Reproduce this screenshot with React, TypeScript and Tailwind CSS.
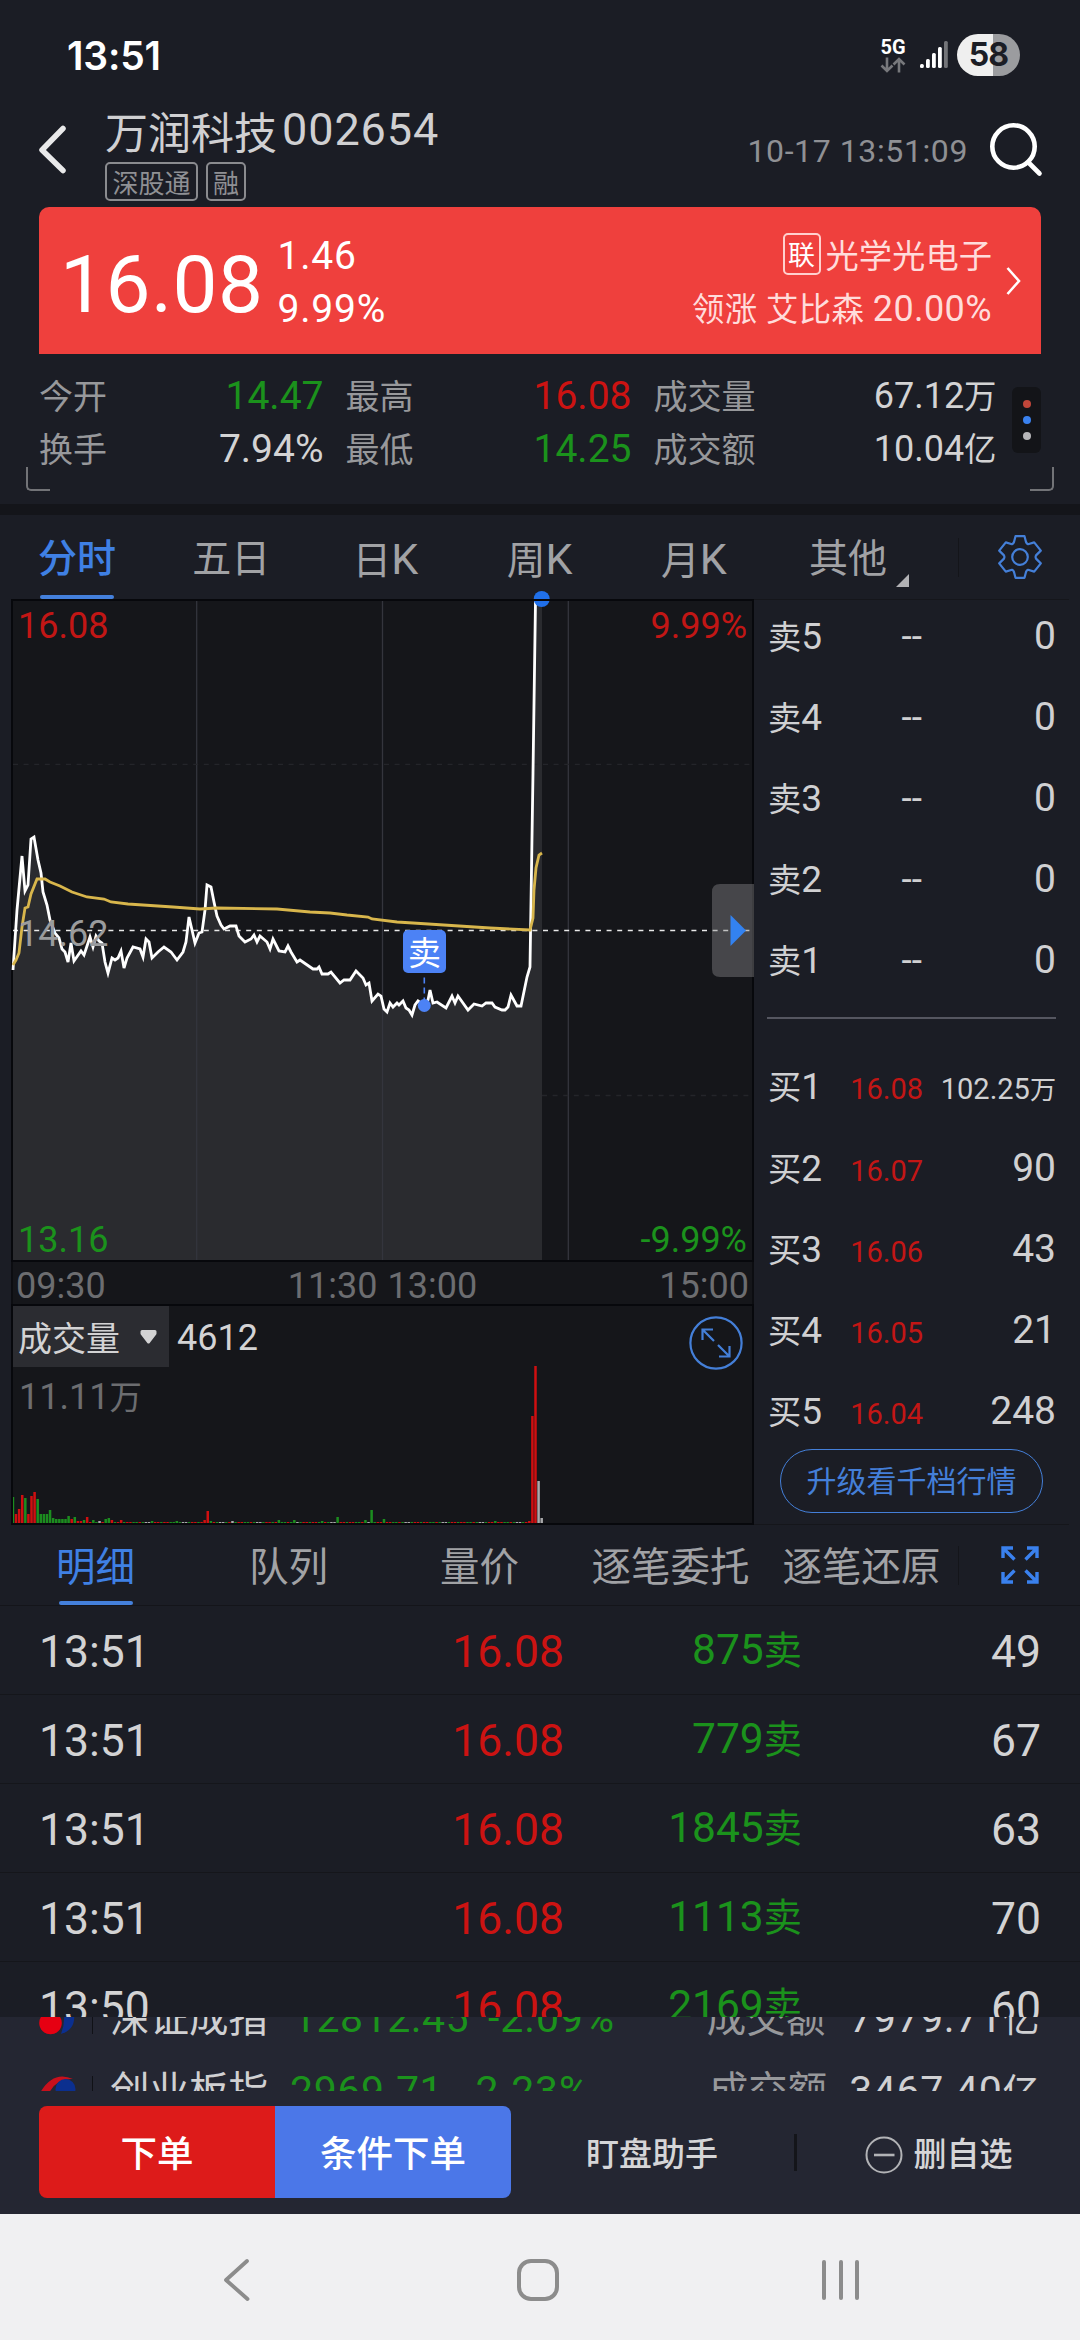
import React from "react";

type Side = "r" | "g" | "w";

// Price curve of the session, in canvas coordinates
const PRICE =
  "13,970 17,910 22,856 25,891 28,885 31,839 34,837 38,860 41,873 43,892 47,905 50,920 55,933 59,938 62,949 65,952 68,962 71,943 74,961 81,951 84,955 87,946 90,937 93,947 96,936 99,941 102,943 105,962 108,973 112,958 115,960 118,958 121,951 124,968 127,958 133,947 140,949 143,957 146,939 149,942 152,958 158,952 164,947 171,952 177,960 183,952 186,942 189,917 192,930 195,943 199,933 202,932 205,910 207,885 211,887 214,902 217,916 221,925 224,929 230,926 236,926 239,936 245,942 251,939 254,935 257,942 260,936 267,942 270,949 273,939 279,951 285,952 288,946 291,952 297,962 300,960 313,969 317,969 319,967 322,974 328,974 331,972 340,983 344,980 350,980 356,971 363,978 366,985 369,983 372,1001 378,994 381,996 384,1009 387,1012 390,1003 393,1007 397,1003 399,1005 403,1001 406,1008 409,1010 412,1015 415,1005 418,1001 424,1005 428,1000 430,990 433,1003 437,1002 446,1008 452,996 455,1003 458,996 468,1010 474,1004 482,1006 486,1003 492,1003 495,1007 502,1010 505,1010 508,1007 511,995 517,1006 521,1006 527,977 530,967 533,773 535.5,601";

const AVERAGE =
  "13,965 16,960 19,953 22,927 25,908 28,907 31,894 37,879 45,879 50,882 60,886 72,892 87,897 104,899 111,902 128,904 173,907 200,909 217,908 277,909 310,912 330,913 347,915 368,917 372,919 397,922 413,923 490,928 530,930 533,918 534,890 536,868 539,855 542,853";

// minute -> [bar height, side]; minutes left out get a one pixel bar
const VOLUME: Record<number, [number, Side]> = {
  0: [26, "g"], 1: [9, "r"], 2: [14, "r"], 3: [28, "r"], 4: [25, "g"], 5: [9, "r"], 6: [27, "r"], 7: [31, "r"],
  8: [24, "g"], 9: [9, "g"], 10: [9, "g"], 11: [9, "g"], 12: [13, "g"], 13: [5, "g"], 14: [4, "g"], 15: [4, "g"],
  16: [4, "g"], 17: [4, "g"], 18: [7, "g"], 19: [4, "r"], 20: [6, "g"], 21: [2, "r"], 22: [2, "r"], 23: [3, "g"],
  24: [6, "r"], 26: [3, "g"], 28: [2, "w"], 30: [4, "g"], 31: [5, "g"], 32: [3, "r"], 35: [3, "r"], 45: [2, "g"],
  53: [2, "g"], 62: [3, "r"], 63: [12, "r"], 64: [2, "g"], 71: [2, "w"], 86: [3, "g"], 91: [3, "g"], 100: [2, "g"],
  105: [6, "g"], 114: [3, "g"], 116: [13, "g"], 120: [4, "g"], 156: [2, "g"], 167: [2, "r"], 168: [107, "r"],
  169: [157, "r"], 170: [42, "w"], 171: [5, "w"],
};

const SIDE_COLOR: Record<Side, string> = { r: "#cf0f10", g: "#1c8d1f", w: "#a9a9ab" };
const QUIET: Side[] = ["g", "r", "r", "g", "w", "r", "g", "r", "g", "g", "r", "w"];

const BARS = Array.from({ length: 172 }, (_, i) => {
  const [h, side] = VOLUME[i] ?? [1, QUIET[(i * 5) % QUIET.length]];
  return { x: Math.max(13, 11.7 + i * 3.092), h, color: SIDE_COLOR[side], w: i === 0 ? 1.2 : 2.5 };
});

const SELLS = ["5", "4", "3", "2", "1"];
const BUYS = [
  { level: "1", price: "16.08", qty: "102.25", unit: "万" },
  { level: "2", price: "16.07", qty: "90" },
  { level: "3", price: "16.06", qty: "43" },
  { level: "4", price: "16.05", qty: "21" },
  { level: "5", price: "16.04", qty: "248" },
];

const TICKS = [
  { time: "13:51", price: "16.08", amount: "875", count: "49" },
  { time: "13:51", price: "16.08", amount: "779", count: "67" },
  { time: "13:51", price: "16.08", amount: "1845", count: "63" },
  { time: "13:51", price: "16.08", amount: "1113", count: "70" },
  { time: "13:50", price: "16.08", amount: "2169", count: "60" },
];

// Chinese characters run slightly smaller than the digits beside them
const Han: React.FC<{ children: React.ReactNode }> = ({ children }) => <span className="text-[0.9em]">{children}</span>;

const StatusBar = () => (
  <div className="flex h-[80px] shrink-0 items-center justify-between pl-[67px] pr-[60px] pt-[30px]">
    <span className="mt-px font-['Inter'] text-[39px] font-semibold leading-none tracking-[-0.2px] text-white">13:51</span>
    <div className="flex items-center">
      <div className="flex w-[26px] flex-col items-center">
        <span className="text-[20px] font-bold leading-[18px] text-white">5G</span>
        <svg className="mt-px" width="26" height="16" viewBox="0 0 26 16" fill="none" stroke="#77787c" strokeWidth="2.6">
          <path d="M7 0.5V13.5M1.5 8.5L7 14L12.5 8.5M19 15.5V2M13.5 7.5L19 2L24.5 7.5" />
        </svg>
      </div>
      <svg className="ml-[14px]" width="28" height="30" viewBox="0 0 28 30" fill="#fff">
        <rect x="0" y="24" width="3.8" height="4" rx="1.5" />
        <rect x="6" y="19" width="3.8" height="9" rx="1.5" />
        <rect x="12" y="13" width="3.8" height="15" rx="1.5" />
        <rect x="18" y="7" width="3.8" height="21" rx="1.5" />
        <rect x="24" y="1" width="3.8" height="27" rx="1.5" fill="#737478" />
      </svg>
      <div className="ml-[9px] flex h-[42px] w-[63px] items-center justify-center rounded-full bg-linear-to-r from-[#efefef] from-57% to-[#9b9c9f] to-57%">
        <span className="font-['Inter'] text-[32px] font-bold leading-none tracking-[-1px] text-[#1b1d25]">58</span>
      </div>
    </div>
  </div>
);

const Header = () => (
  <div className="flex h-[127px] shrink-0 items-start pl-[37px] pr-[37px]">
    <svg className="mt-[44px]" width="32" height="52" viewBox="0 0 32 52" fill="none" stroke="#e9e9ea" strokeWidth="5.5" strokeLinecap="round" strokeLinejoin="round">
      <path d="M26 4.5L5 26L26 46.5" />
    </svg>
    <div className="ml-[36px] mt-[28px]">
      <div className="flex h-[43px] items-center whitespace-nowrap leading-[43px] text-[#d0d0d2]">
        <span className="mt-[9px] text-[43px]">万润科技</span>
        <span className="ml-[5px] text-[45px] tracking-[0.9px]">002654</span>
      </div>
      <div className="mt-[11px] flex gap-[8px] text-[26px] leading-none text-[#8f9094]">
        <span className="flex h-[39px] w-[93px] items-center justify-center rounded-[5px] border-2 border-[#8a8b8f] pt-[4px]">深股通</span>
        <span className="flex h-[39px] w-[40px] items-center justify-center rounded-[5px] border-2 border-[#8a8b8f] pt-[4px]">融</span>
      </div>
    </div>
    <span className="ml-auto mt-[49px] text-[32px] leading-[44px] tracking-[0.6px] text-[#8f9094]">10-17 13:51:09</span>
    <svg className="ml-[19px] mt-[40px]" width="56" height="58" viewBox="0 0 56 58" fill="none" stroke="#fff" strokeWidth="4.6" strokeLinecap="round">
      <circle cx="26.5" cy="26.5" r="21.2" />
      <path d="M42 43L52.5 53.5" />
    </svg>
  </div>
);

const PriceCard = () => (
  <div className="mx-[39px] flex h-[147px] shrink-0 items-center rounded-t-[10px] bg-[#ef403d] pl-[21px] pr-[20px] text-white">
    <span className="mt-[8px] text-[80px] leading-none tracking-[0.5px]">16.08</span>
    <div className="ml-[14px] mt-[5px] text-[39px] leading-[53px] tracking-[0.8px]">
      <div>1.46</div>
      <div>9.99%</div>
    </div>
    <div className="ml-auto mt-[5px] flex flex-col items-end text-[#ffdcdb]">
      <div className="flex h-[53px] items-center">
        <span className="mr-[5px] mt-[-4px] flex h-[42px] w-[38px] items-center justify-center rounded-[5px] border-2 border-[#ffd0ce] pt-[4px] text-[27px] leading-none text-white">联</span>
        <span className="pt-[2px] text-[33.3px] leading-none">光学光电子</span>
      </div>
      <div className="whitespace-pre text-[36px] leading-[53px] tracking-[0.4px]">
        <Han>领涨 艾比森 </Han>20.00%
      </div>
    </div>
    <svg className="ml-[14px]" width="15" height="30" viewBox="0 0 15 30" fill="none" stroke="#fff" strokeWidth="2.6">
      <path d="M1.5 2L13 15L1.5 28" />
    </svg>
  </div>
);

const Stat = ({ label, className, children }: { label: string; className: string; children: React.ReactNode }) => (
  <div className="flex items-center justify-between leading-[53px]">
    <span className="pt-[2px] text-[34px] text-[#97989b]">{label}</span>
    <span className={className}>{children}</span>
  </div>
);

const Stats = () => (
  <div className="relative flex h-[150px] shrink-0 items-start pl-[39px] pr-[39px] pt-[15.5px]">
    <div className="grid auto-rows-[53px] grid-cols-[284.5px_286px_343px] gap-x-[22px]">
      <Stat label="今开" className="text-[39px] text-[#1b921c]">14.47</Stat>
      <Stat label="最高" className="text-[39px] text-[#cc1312]">16.08</Stat>
      <Stat label="成交量" className="pt-[2px] text-[36px] text-[#d3d3d4]">67.12<Han>万</Han></Stat>
      <Stat label="换手" className="text-[39px] text-[#d3d3d4]">7.94%</Stat>
      <Stat label="最低" className="text-[39px] text-[#1b921c]">14.25</Stat>
      <Stat label="成交额" className="pt-[2px] text-[36px] text-[#d3d3d4]">10.04<Han>亿</Han></Stat>
    </div>
    <div className="ml-auto mt-[17.5px] flex h-[66px] w-[29px] flex-col items-center justify-center gap-[8px] rounded-[6px] bg-[#131418]">
      <i className="size-[8px] rounded-full bg-[#c0463a]" />
      <i className="size-[8px] rounded-full bg-[#3a81ee]" />
      <i className="size-[8px] rounded-full bg-[#b6b6b9]" />
    </div>
    <i className="absolute bottom-[13px] left-[26px] size-[24px] rounded-bl-[5px] border-b-[2.5px] border-l-[2.5px] border-[#727377]" />
    <i className="absolute bottom-[13px] right-[26px] size-[24px] rounded-br-[5px] border-b-[2.5px] border-r-[2.5px] border-[#727377]" />
  </div>
);

const GearIcon = () => (
  <svg width="44" height="44" viewBox="0 0 44 44" fill="none" stroke="#447fd8" strokeWidth="2.2" strokeLinejoin="round">
    <path d="M17.5 1.2H26.5L28 7Q28.6 8.6 30 9.2L36.2 7.4L42.8 15.6L38 20.4Q37.2 22 38 23.6L42.8 28.4L36.2 36.6L30 34.8Q28.6 35.4 28 37L26.5 42.8H17.5L16 37Q15.4 35.4 14 34.8L7.8 36.6L1.2 28.4L6 23.6Q6.8 22 6 20.4L1.2 15.6L7.8 7.4L14 9.2Q15.4 8.6 16 7Z" />
    <circle cx="22" cy="22" r="7.8" />
  </svg>
);

const PeriodTabs = () => (
  <div className="flex h-[84px] shrink-0 items-center text-[39px] text-[#a1a2a5]">
    <div className="flex h-full w-[925px] pt-[4px]">
      <div className="relative flex flex-1 items-center justify-center font-medium text-[#3f80e4]">
        分时
        <i className="absolute bottom-0 h-[4px] w-[74px] rounded-full bg-[#4480dc]" />
      </div>
      <div className="flex flex-1 items-center justify-center">五日</div>
      {["日", "周", "月"].map((p) => (
        <div key={p} className="flex flex-1 items-center justify-center text-[43px]">
          <span><Han>{p}</Han>K</span>
        </div>
      ))}
      <div className="relative flex flex-1 items-center justify-center">
        其他
        <svg className="absolute bottom-[12px] right-[16px]" width="13" height="13" fill="#b2b2b5">
          <path d="M13 0V13H0Z" />
        </svg>
      </div>
    </div>
    <i className="ml-[33px] h-[39px] w-px bg-[#14151a]" />
    <div className="ml-[39px]">
      <GearIcon />
    </div>
  </div>
);

const PriceChart = () => (
  <div className="relative h-[663px] text-[36px] leading-[36px]">
    <svg className="absolute inset-0 overflow-visible" width="743" height="663" viewBox="11 599 743 663" fill="none">
      <rect x="12" y="600" width="741" height="661" fill="#15161a" stroke="#07080c" strokeWidth="2" />
      <polygon points={`${PRICE} 536,601 542,601 542,1260 13,1260`} fill="#2a2b2f" />
      <path d="M196.7 601V1260M382.5 601V1260M568.3 601V1260" stroke="#34353d" strokeWidth="1.3" />
      <path d="M13 764.3H752M542 1095.5H752" stroke="#24252a" strokeWidth="1.3" strokeDasharray="5 5.6" />
      <path d="M13 930.5H752" stroke="#e8e8e8" strokeWidth="1.4" strokeDasharray="5 5.6" />
      <polyline points={PRICE} stroke="#fff" strokeWidth="2.8" />
      <polyline points={AVERAGE} stroke="#d8b64c" strokeWidth="2.8" />
      <circle cx="541.7" cy="599" r="8" fill="#2070ea" />
      <path d="M530 600H554" stroke="#07080c" strokeWidth="2" />
      <path d="M424.3 977.5V1001" stroke="#4c82f5" strokeWidth="1.6" strokeDasharray="6 4" />
      <circle cx="424.3" cy="1005.5" r="6.5" fill="#4c82f5" />
      <path d="M754 884H720Q712 884 712 892V969Q712 977 720 977H754Z" fill="#8a8b8d" fillOpacity="0.42" />
      <path d="M730.5 915L746 930.5L730.5 946Z" fill="#3382f0" />
    </svg>
    <span className="absolute left-[7px] top-[9px] text-[#c21615]">16.08</span>
    <span className="absolute right-[7px] top-[9px] text-[#c21615]">9.99%</span>
    <span className="absolute left-[7px] top-[317px] text-[#9a9b9d]">14.62</span>
    <span className="absolute bottom-[4px] left-[7px] text-[#1b921c]">13.16</span>
    <span className="absolute bottom-[4px] right-[7px] text-[#1b921c]">-9.99%</span>
    <span className="absolute left-[392px] top-[331px] flex size-[43px] items-center justify-center rounded-[5px] bg-[#4c82f5] pt-[4px] text-[33px] text-white">卖</span>
  </div>
);

const VolumeChart = () => (
  <div className="relative h-[221px] border-2 border-[#07080c] bg-[#15161a]">
    <svg className="absolute inset-0" width="739" height="217" viewBox="13 1306 739 217">
      {BARS.map((b) => (
        <rect key={b.x} x={b.x} y={1523 - b.h} width={b.w} height={b.h} fill={b.color} />
      ))}
    </svg>
    <div className="flex h-[61px] items-center text-[36px] text-[#d3d3d4]">
      <div className="flex h-full w-[156px] items-center bg-[#2b2c31] pl-[5px]">
        <span className="pt-[4px] text-[34px] leading-none">成交量</span>
        <svg className="ml-[20px]" width="17" height="16" viewBox="0 0 17 16" fill="#d3d3d4" stroke="#d3d3d4" strokeWidth="3" strokeLinejoin="round">
          <path d="M2 2.5H15V4.5L8.5 13L2 4.5Z" />
        </svg>
      </div>
      <span className="ml-[8px] pt-[2px] leading-none">4612</span>
      <svg className="ml-auto mr-[9px] mt-[13px]" width="54" height="54" viewBox="0 0 54 54" fill="none" stroke="#447fd8" strokeWidth="2.2">
        <circle cx="27" cy="27" r="25.6" />
        <path d="M25 25L13.5 13.5M13.5 24V13.5H24M29 29L40.5 40.5M40.5 30V40.5H30" />
      </svg>
    </div>
    <div className="ml-[6px] mt-[12px] text-[36px] leading-[36px] text-[#6c6d70]">
      11.11<Han>万</Han>
    </div>
  </div>
);

const OrderBook = () => (
  <div className="mr-[11px] flex flex-1 flex-col border-y border-[#15161b] pl-[13px] pr-[13px] text-[#d0d0d2]">
    <div className="flex flex-col gap-[9px]">
      {SELLS.map((level) => (
        <div key={level} className="flex h-[72px] items-baseline pl-px leading-[72px]">
          <span className="w-[56px] text-[37px]"><Han>卖</Han>{level}</span>
          <span className="w-[98px] text-right text-[37px]">--</span>
          <span className="flex-1 text-right text-[39px]">0</span>
        </div>
      ))}
    </div>
    <i className="mt-[21px] h-[1.5px] shrink-0 bg-[#555660]" />
    <div className="mt-[32px] flex flex-col gap-[9px]">
      {BUYS.map((b) => (
        <div key={b.level} className="flex h-[72px] items-baseline whitespace-nowrap pl-px leading-[72px]">
          <span className="w-[56px] text-[37px]"><Han>买</Han>{b.level}</span>
          <span className="w-[99px] text-right text-[29px] text-[#c21615]">{b.price}</span>
          <span className={b.unit ? "flex-1 text-right text-[29px]" : "flex-1 text-right text-[39px]"}>
            {b.qty}
            {b.unit && <Han>{b.unit}</Han>}
          </span>
        </div>
      ))}
    </div>
    <div className="ml-[13px] mt-[2px] flex h-[64px] w-[263px] items-center justify-center rounded-full border-[1.5px] border-[#447fd8] pt-[3px] text-[30px] leading-none text-[#447fd8]">
      升级看千档行情
    </div>
  </div>
);

const DetailTabs = () => (
  <div className="flex h-[81px] shrink-0 items-center border-b border-[#14151a] text-[39.5px] text-[#a1a2a5]">
    <div className="flex h-full w-[957px] pt-[6px]">
      <div className="relative flex flex-1 items-center justify-center pr-[2px] text-[#3f80e4]">
        明细
        <i className="absolute bottom-0 h-[4px] w-[74px] rounded-full bg-[#4480dc]" />
      </div>
      {["队列", "量价", "逐笔委托", "逐笔还原"].map((t) => (
        <div key={t} className="flex flex-1 items-center justify-center whitespace-nowrap">{t}</div>
      ))}
    </div>
    <i className="ml-px h-[39px] w-px bg-[#14151a]" />
    <svg className="ml-[42px]" width="38" height="38" viewBox="0 0 38 38" fill="none" stroke="#3a81ee" strokeWidth="3.4">
      <path d="M13.5 13.5L2 2M2 12V2H12M24.5 13.5L36 2M26 2H36V12M13.5 24.5L2 36M2 26V36H12M24.5 24.5L36 36M26 36H36V26" />
    </svg>
  </div>
);

const TickList = () => (
  <div className="h-[411px] shrink-0 overflow-hidden text-[44.5px] leading-[92px] text-[#d3d3d4]">
    {TICKS.map((t, i) => (
      <div key={i} className="flex h-[89px] border-b border-[#15161b] pl-[39px]">
        <span className="w-[200px]">{t.time}</span>
        <span className="w-[325px] text-right text-[#cc1312]">{t.price}</span>
        <span className="-mt-[2px] w-[238px] text-right text-[42.5px] text-[#1b921c]">{t.amount}<Han>卖</Han></span>
        <span className="w-[239px] text-right">{t.count}</span>
      </div>
    ))}
  </div>
);

const IndexTicker = () => (
  <div className="h-[74px] overflow-hidden">
    <div className="-mt-[35px] text-[41px] leading-[73px]">
      <div className="flex h-[73px] items-center whitespace-nowrap pl-[39px] pr-[40px]">
        <svg width="37" height="37" viewBox="0 0 37 37">
          <path d="M35 14Q37 29 22 34Q26 24 25 12Z" fill="#0b2f8f" />
          <circle cx="11.5" cy="23" r="11.3" fill="#e60012" />
        </svg>
        <i className="ml-[16px] h-[31px] w-px bg-[#101116]" />
        <span className="ml-[17px] text-[39.5px] text-[#d0d0d2]">深证成指</span>
        <span className="ml-[25px] tracking-[0.5px] text-[#1b921c]">12812.45</span>
        <span className="ml-[19px] tracking-[0.9px] text-[#1b921c]">-2.09%</span>
        <span className="ml-auto text-[39.5px] text-[#97989b]">成交额</span>
        <span className="ml-[24px] tracking-[0.6px] text-[#d0d0d2]">7979.71<Han>亿</Han></span>
      </div>
      <div className="flex h-[73px] items-center whitespace-nowrap pl-[39px] pr-[40px]">
        <svg width="37" height="37" viewBox="0 0 37 37">
          <path d="M1 20Q14 -3 34 6Q15 5 8 25Z" fill="#c8101c" />
          <circle cx="26.5" cy="16" r="10" fill="#0b2f8f" />
        </svg>
        <i className="ml-[16px] h-[31px] w-px bg-[#101116]" />
        <span className="ml-[17px] text-[39.5px] text-[#d0d0d2]">创业板指</span>
        <span className="ml-[22px] tracking-[0.6px] text-[#1b921c]">2969.71</span>
        <span className="ml-[20px] tracking-[0.9px] text-[#1b921c]">-2.23%</span>
        <span className="ml-auto text-[39.5px] text-[#97989b]">成交额</span>
        <span className="ml-[22px] tracking-[0.6px] text-[#d0d0d2]">3467.40<Han>亿</Han></span>
      </div>
    </div>
  </div>
);

const ActionBar = () => (
  <div className="mt-[15px] flex h-[92px] items-center pl-[39px] font-medium">
    <div className="flex h-full w-[472px] overflow-hidden rounded-[8px] text-[36.5px] text-white">
      <div className="flex flex-1 items-center justify-center bg-[#dd1b1a] pt-[6px]">下单</div>
      <div className="flex flex-1 items-center justify-center bg-[#4b77e8] pt-[6px]">条件下单</div>
    </div>
    <div className="ml-[75px] pt-[5px] text-[33px] text-[#d5d5d7]">盯盘助手</div>
    <i className="ml-[76px] h-[37px] w-[2.5px] bg-[#14151a]" />
    <svg className="ml-[68px] mt-[5px]" width="38" height="38" viewBox="0 0 38 38" fill="none" stroke="#b2b3b6" strokeWidth="2">
      <circle cx="19" cy="19" r="17.5" />
      <path d="M9 19H29.5" strokeWidth="2.6" />
    </svg>
    <div className="ml-[11px] pt-[5px] text-[33px] text-[#d5d5d7]">删自选</div>
  </div>
);

const NavBar = () => (
  <div className="flex h-[126px] shrink-0 items-center bg-[#f0f0f2] pl-[222px] pt-[5px]">
    <svg width="30" height="44" viewBox="0 0 30 44" fill="none" stroke="#8c8c8c" strokeWidth="3.8" strokeLinecap="round" strokeLinejoin="round">
      <path d="M25 3L4 22L25.5 41" />
    </svg>
    <i className="ml-[265px] h-[42px] w-[42px] rounded-[14px] border-4 border-[#8c8c8c]" />
    <div className="ml-[263px] flex gap-[12.6px]">
      <i className="h-[40px] w-[4px] rounded-full bg-[#8c8c8c]" />
      <i className="h-[40px] w-[4px] rounded-full bg-[#8c8c8c]" />
      <i className="h-[40px] w-[4px] rounded-full bg-[#8c8c8c]" />
    </div>
  </div>
);

const App: React.FC = () => {
  return (
    <div className="flex h-[2340px] w-[1080px] flex-col overflow-hidden bg-[#1b1d25] font-['Roboto','Noto_Sans_CJK_SC',sans-serif]">
      <StatusBar />
      <Header />
      <PriceCard />
      <Stats />
      <div className="h-[11px] shrink-0 bg-[#14151a]" />
      <PeriodTabs />

      {/* Intraday chart and five-level order book */}
      <div className="flex h-[926px] shrink-0">
        <div className="ml-[11px] w-[743px]">
          <PriceChart />
          <div className="flex h-[42px] items-center justify-between border-x-2 border-[#0c0d11] bg-[#15161a] px-[3px] pt-[5px] text-[36px] leading-none text-[#6c6d70]">
            <span>09:30</span>
            <span className="flex gap-[10px]">
              <span>11:30</span>
              <span>13:00</span>
            </span>
            <span>15:00</span>
          </div>
          <VolumeChart />
        </div>
        <OrderBook />
      </div>

      <DetailTabs />
      <TickList />
      <div className="h-[197px] shrink-0 bg-[#242632]">
        <IndexTicker />
        <ActionBar />
      </div>
      <NavBar />
    </div>
  );
};

export default App;
